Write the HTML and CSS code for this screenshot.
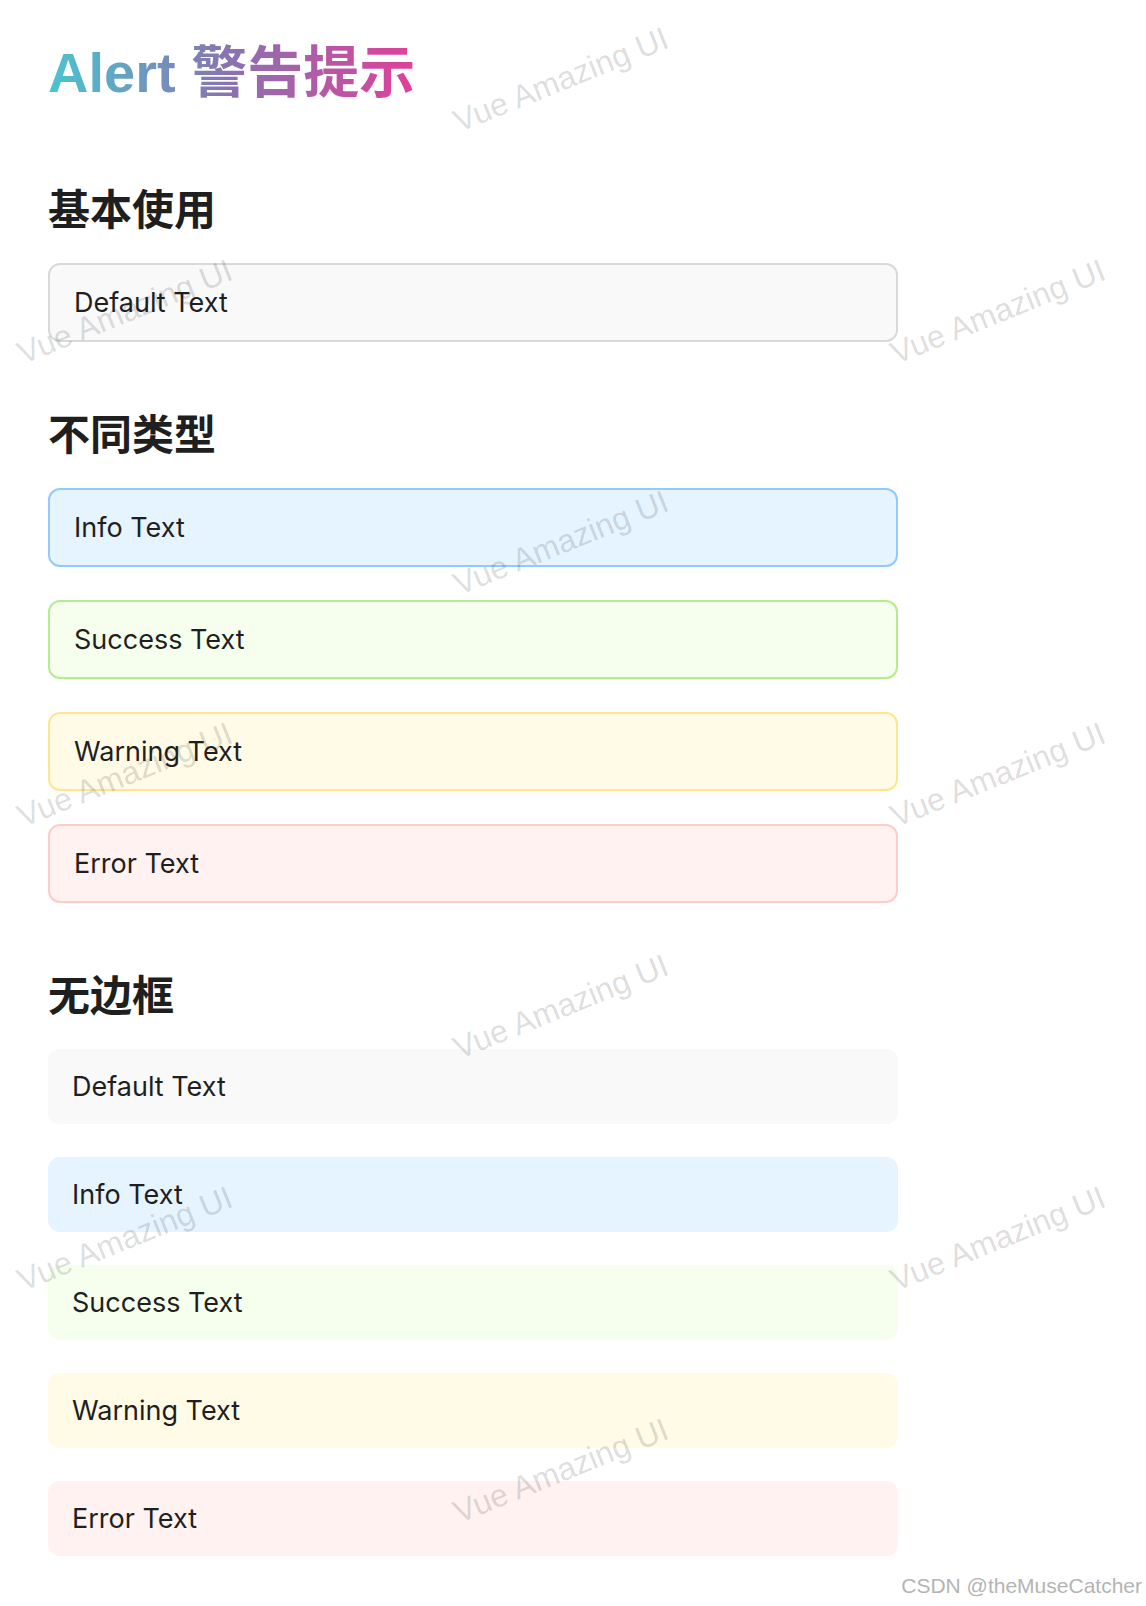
FILE: index.html
```html
<!DOCTYPE html>
<html lang="zh-CN">
<head>
    <meta charset="UTF-8">
    <meta name="viewport" content="width=device-width, initial-scale=1.0">
    <title>Alert 警告提示</title>
    <link rel="stylesheet" href="styles.css">
</head>
<body>

    <div class="page">
        <h1 class="page-title"><span class="gradient-text">Alert 警告提示</span></h1>

        <h2 class="section-title">基本使用</h2>
        <div class="alert-list">
            <div class="alert alert-default">Default Text</div>
        </div>

        <h2 class="section-title">不同类型</h2>
        <div class="alert-list">
            <div class="alert alert-info">Info Text</div>
            <div class="alert alert-success">Success Text</div>
            <div class="alert alert-warning">Warning Text</div>
            <div class="alert alert-error">Error Text</div>
        </div>

        <h2 class="section-title">无边框</h2>
        <div class="alert-list borderless">
            <div class="alert alert-default">Default Text</div>
            <div class="alert alert-info">Info Text</div>
            <div class="alert alert-success">Success Text</div>
            <div class="alert alert-warning">Warning Text</div>
            <div class="alert alert-error">Error Text</div>
        </div>
    </div>

    <!-- watermark layer -->
    <div class="watermark">
        <span class="wm" style="left: 561px; top: 80px;">Vue Amazing UI</span>
        <span class="wm" style="left: 125px; top: 312px;">Vue Amazing UI</span>
        <span class="wm" style="left: 998px; top: 312px;">Vue Amazing UI</span>
        <span class="wm" style="left: 561px; top: 543px;">Vue Amazing UI</span>
        <span class="wm" style="left: 125px; top: 775px;">Vue Amazing UI</span>
        <span class="wm" style="left: 998px; top: 775px;">Vue Amazing UI</span>
        <span class="wm" style="left: 561px; top: 1007px;">Vue Amazing UI</span>
        <span class="wm" style="left: 125px; top: 1239px;">Vue Amazing UI</span>
        <span class="wm" style="left: 998px; top: 1239px;">Vue Amazing UI</span>
        <span class="wm" style="left: 561px; top: 1471px;">Vue Amazing UI</span>
    </div>

    <div class="credit">CSDN @theMuseCatcher</div>

</body>
</html>
```

FILE: styles.css
```css
body {
    margin: 0;
    padding: 0;
    background-color: #fff;
    font-family: Inter, "Noto Sans", "Noto Sans CJK SC", sans-serif;
    color: rgba(0, 0, 0, 0.88);
    position: relative;
    min-height: 1606px;
    overflow: hidden;
}
.page {
    width: 850px;
    padding: 37px 0 0 48px;
}
.page-title {
    margin: 0 0 70px;
    font-family: "Liberation Sans", Arial, "Noto Sans CJK SC", sans-serif;
    font-size: 56px;
    font-weight: 700;
    line-height: 72px;
}
.gradient-text {
    display: inline-block;
    background-image: linear-gradient(90deg, #4bc4d0 0%, #8a72b0 50%, #e0409a 100%);
    -webkit-background-clip: text;
    background-clip: text;
    color: transparent;
}
.section-title {
    margin: 0 0 28px;
    font-family: "Noto Sans CJK SC", sans-serif;
    font-size: 42px;
    font-weight: 700;
    line-height: 56px;
    color: #1f1f1f;
}
.alert-list {
    display: flex;
    flex-direction: column;
    gap: 33px;
    margin-bottom: 62px;
}
.alert {
    padding: 22px 24px;
    font-size: 27px;
    line-height: 31px;
    border: 2px solid transparent;
    border-radius: 12px;
    color: #1f1f1f;
}
.alert-default {
    background-color: #f9f9f9;
    border-color: #d9d9d9;
}
.alert-info {
    background-color: #e6f4ff;
    border-color: #91caff;
}
.alert-success {
    background-color: #f6ffed;
    border-color: #b7eb8f;
}
.alert-warning {
    background-color: #fffbe6;
    border-color: #ffe58f;
}
.alert-error {
    background-color: #fff2f0;
    border-color: #ffccc7;
}
.borderless .alert {
    border: none;
}
.watermark {
    position: absolute;
    top: 0;
    left: 0;
    right: 0;
    bottom: 0;
    pointer-events: none;
}
.wm {
    position: absolute;
    transform: translate(-50%, -50%) rotate(-22deg);
    font-family: "Liberation Sans", Arial, sans-serif;
    font-size: 32px;
    color: rgba(0, 0, 0, 0.15);
    white-space: nowrap;
}
.credit {
    position: absolute;
    right: 4px;
    top: 1574px;
    font-family: "Liberation Sans", Arial, sans-serif;
    font-size: 21px;
    color: #b4b4b4;
    text-shadow: 0 0 2px #fff;
}
```
